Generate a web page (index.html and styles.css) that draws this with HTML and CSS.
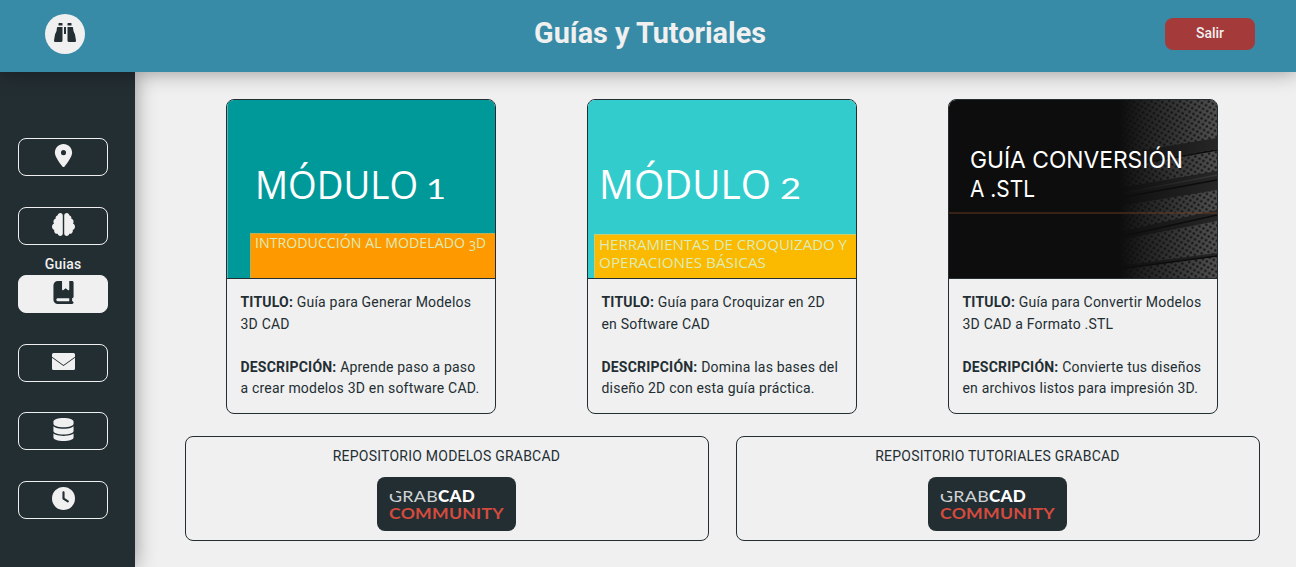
FILE: index.html
```html
<!DOCTYPE html>
<html lang="es">
<head>
<meta charset="utf-8">
<title>Guías y Tutoriales</title>
<link rel="stylesheet" href="styles.css">
</head>
<body>
<header class="header">
  <a class="brand"><svg width="22" height="20" viewBox="0 0 22 20"><path d="M5 0h3q.5 0 .5.5V2.500h-4V.5Q4.500 0 5 0zm9 0h3q.5 0 .5.5v2h-4V.5q0-.5.5-.5zM3.500 4h5v13.500q0 1.500-1.500 1.500H1q-1 0-1-1.500l1-6q2-3 2-7zm10 0h5l.5.5q0 4 2 7l1 6q0 1.500-1 1.500h-6q-1.500 0-1.500-1.500zM10 4h2v7h-2z"/></svg></a>
  <h1 class="title">Guías y Tutoriales</h1>
  <button class="logout">Salir</button>
</header>
<div class="body">
  <nav class="sidebar">
    <a class="nav"><svg class="icon" viewBox="0 0 512 512"><path transform="translate(64)" d="M215.7 499.2C267 435 384 279.4 384 192C384 86 298 0 192 0S0 86 0 192c0 87.400 117 243 168.300 307.200c12.300 15.300 35.100 15.300 47.400 0zM192 136a56 56 0 1 1 0 112 56 56 0 1 1 0-112z"/></svg></a>
    <a class="nav"><svg class="icon" viewBox="0 0 512 512"><path d="M184 0c30.900 0 56 25.100 56 56V456c0 30.900-25.100 56-56 56c-28.900 0-52.700-21.900-55.700-50.100c-5.200 1.400-10.700 2.100-16.300 2.100c-35.300 0-64-28.700-64-64c0-7.400 1.300-14.600 3.600-21.200C21.400 367.400 0 338.200 0 304c0-31.900 18.700-59.500 45.800-72.300C37.100 220.800 32 207 32 192c0-30.700 21.600-56.300 50.400-62.600C80.800 123.900 80 118 80 112c0-29.900 20.600-55.100 48.300-62.100C131.300 21.900 155.100 0 184 0zM328 0c28.900 0 52.600 21.900 55.700 49.900c27.800 7 48.300 32.100 48.300 62.100c0 6-.8 11.900-2.400 17.400c28.800 6.200 50.400 31.900 50.400 62.600c0 15-5.100 28.800-13.800 39.700C493.300 244.500 512 272.100 512 304c0 34.200-21.400 63.400-51.600 74.800c2.300 6.600 3.600 13.800 3.600 21.200c0 35.300-28.700 64-64 64c-5.600 0-11.100-.7-16.300-2.100c-3 28.200-26.800 50.100-55.700 50.100c-30.900 0-56-25.100-56-56V56c0-30.900 25.100-56 56-56z"/></svg></a>
    <div class="current">
      <span class="caption">Guias</span>
      <a class="nav active"><svg class="icon" viewBox="0 0 512 512"><path fill-rule="evenodd" transform="translate(32)" d="M0 96C0 43 43 0 96 0h96v190.700c0 13.400 15.500 20.900 26 12.500L272 160l54 43.200c10.500 8.400 26 .9 26-12.500V0h64c17.700 0 32 14.300 32 32v320c0 17.700-14.300 32-32 32v64c17.700 0 32 14.300 32 32s-14.300 32-32 32H96c-53 0-96-43-96-96zM64 416c0 17.700 14.300 32 32 32h256v-64H96c-17.700 0-32 14.300-32 32z"/></svg></a>
    </div>
    <a class="nav"><svg class="icon" viewBox="0 0 23 23"><path d="M1.500 3h20q1.500 0 1.500 1.500v2.200L11.500 15 0 6.700v-2.200Q0 3 1.500 3zM0 7.800l11.500 8.300L23 7.800v10.700q0 1.500-1.500 1.500h-20Q0 20 0 18.500z"/></svg></a>
    <a class="nav"><svg class="icon" viewBox="0 0 512 512"><path transform="translate(32)" d="M448 80v48c0 44.200-100.300 80-224 80S0 172.200 0 128V80C0 35.800 100.300 0 224 0S448 35.800 448 80zM393.200 214.700c20.800-7.400 39.900-16.900 54.800-28.600V288c0 44.200-100.300 80-224 80S0 332.200 0 288V186.100c14.900 11.800 34 21.200 54.800 28.600C99.700 230.700 159.500 240 224 240s124.300-9.300 169.200-25.300zM0 346.100c14.900 11.800 34 21.200 54.800 28.600C99.700 390.700 159.500 400 224 400s124.300-9.300 169.200-25.300c20.800-7.400 39.900-16.900 54.800-28.600V432c0 44.200-100.300 80-224 80S0 476.200 0 432V346.100z"/></svg></a>
    <a class="nav"><svg class="icon" viewBox="0 0 512 512"><path d="M256 0a256 256 0 1 1 0 512A256 256 0 1 1 256 0zM232 120V256c0 8 4 15.500 10.700 20l96 64c11 7.400 25.900 4.400 33.300-6.700s4.400-25.900-6.700-33.300L280 243.200V120c0-13.300-10.700-24-24-24s-24 10.700-24 24z"/></svg></a>
  </nav>
  <main class="content">
    <section class="cards">
      <article class="card">
        <svg class="cover" viewBox="0 0 268 178">
          <rect width="268" height="178" fill="#009999"/>
          <rect width="1" height="178" fill="#55b8b4"/>
          <rect x="23.500" y="133.500" width="247" height="46" fill="#ff9900" stroke="#b5b25a"/>
          <g class="slide"><text x="28" y="99" font-size="38" textLength="163" lengthAdjust="spacingAndGlyphs">MÓDULO</text><text class="digit" x="199" y="99" font-size="27" textLength="20" lengthAdjust="spacingAndGlyphs">1</text></g>
          <g class="slide pale" font-size="14"><text x="28" y="148" textLength="210" lengthAdjust="spacingAndGlyphs">INTRODUCCIÓN AL MODELADO</text><text x="242" y="151" textLength="7" lengthAdjust="spacingAndGlyphs">3</text><text x="249" y="148" textLength="10" lengthAdjust="spacingAndGlyphs">D</text></g>
        </svg>
        <div class="info"><p><b>TITULO:</b> Guía para Generar Modelos<br>3D CAD</p><p><b>DESCRIPCIÓN:</b> Aprende paso a paso<br>a crear modelos 3D en software CAD.</p></div>
      </article>
      <article class="card">
        <svg class="cover" viewBox="0 0 268 178">
          <rect width="268" height="178" fill="#33cccc"/>
          <rect x="6.500" y="134.500" width="263" height="46" fill="#fbb900" stroke="#c5cf78"/>
          <g class="slide"><text x="11" y="99" font-size="39.500" textLength="172" lengthAdjust="spacingAndGlyphs">MÓDULO</text><text class="digit" x="192" y="99" font-size="28" textLength="21" lengthAdjust="spacingAndGlyphs">2</text></g>
          <g class="slide pale" font-size="14.500"><text x="11" y="150" textLength="248" lengthAdjust="spacingAndGlyphs">HERRAMIENTAS DE CROQUIZADO Y</text><text x="11" y="168" textLength="167" lengthAdjust="spacingAndGlyphs">OPERACIONES BÁSICAS</text></g>
        </svg>
        <div class="info"><p><b>TITULO:</b> Guía para Croquizar en 2D<br>en Software CAD</p><p><b>DESCRIPCIÓN:</b> Domina las bases del<br>diseño 2D con esta guía práctica.</p></div>
      </article>
      <article class="card">
        <svg class="cover" viewBox="0 0 268 178">
          <defs>
            <pattern id="mesh" width="7" height="6" patternUnits="userSpaceOnUse" patternTransform="rotate(-12)"><rect width="7" height="6" fill="#505050"/><circle cx="1.750" cy="1.500" r="1.350" fill="#181818"/><circle cx="5.250" cy="4.500" r="1.350" fill="#181818"/></pattern>
            <linearGradient id="fade"><stop offset="0" stop-color="#0d0d0d"/><stop offset=".25" stop-color="#0d0d0d" stop-opacity=".7"/><stop offset="1" stop-color="#0d0d0d" stop-opacity="0"/></linearGradient>
          </defs>
          <rect width="268" height="178" fill="#0d0d0d"/>
          <rect x="170" width="98" height="178" fill="url(#mesh)"/>
          <path d="M170 54L268 38V49L170 66zM170 88L268 71V90L170 106zM170 132L268 110V121L170 140zM170 166L268 153V156L170 169z" fill="#262626"/>
          <path d="M170 67L268 50M170 98L268 80M170 137L268 115M170 169L268 156" stroke="#0c0c0c" stroke-width="1.500"/>
          <path d="M170 94L268 75" stroke="#393939" stroke-width="1.500"/>
          <rect x="170" width="98" height="178" fill="url(#fade)"/>
          <rect y="112" width="268" height="2" fill="#7a4023" opacity=".4"/>
          <g class="slide-inter"><text x="21" y="68" textLength="213" lengthAdjust="spacingAndGlyphs">GUÍA CONVERSIÓN</text><text x="21" y="96.500" textLength="65" lengthAdjust="spacingAndGlyphs">A .STL</text></g>
        </svg>
        <div class="info"><p><b>TITULO:</b> Guía para Convertir Modelos<br>3D CAD a Formato .STL</p><p><b>DESCRIPCIÓN:</b> Convierte tus diseños<br>en archivos listos para impresión 3D.</p></div>
      </article>
    </section>
    <section class="repos">
      <article class="repo"><span>REPOSITORIO MODELOS GRABCAD</span>
        <a class="logo"><svg width="139" height="54"><g font-size="16"><text x="12" y="24.500" textLength="49" lengthAdjust="spacingAndGlyphs" class="thin">GRAB</text><text x="61" y="24.500" textLength="37" lengthAdjust="spacingAndGlyphs" class="heavy">CAD</text><text x="12" y="42" textLength="115" lengthAdjust="spacingAndGlyphs" class="red">COMMUNITY</text></g><path d="M11 12h8v5h-8z" fill="#232e33"/></svg></a></article>
      <article class="repo"><span>REPOSITORIO TUTORIALES GRABCAD</span>
        <a class="logo"><svg width="139" height="54"><g font-size="16"><text x="12" y="24.500" textLength="49" lengthAdjust="spacingAndGlyphs" class="thin">GRAB</text><text x="61" y="24.500" textLength="37" lengthAdjust="spacingAndGlyphs" class="heavy">CAD</text><text x="12" y="42" textLength="115" lengthAdjust="spacingAndGlyphs" class="red">COMMUNITY</text></g><path d="M11 12h8v5h-8z" fill="#232e33"/></svg></a></article>
    </section>
  </main>
</div>
</body>
</html>
```
FILE: styles.css
```css
* { box-sizing: border-box; }
body { margin: 0; height: 567px; overflow: hidden; display: flex; flex-direction: column; background: #f0f0f0; color: #232e33; font-family: Roboto, sans-serif; }
.header { position: relative; z-index: 2; height: 72px; flex: none; display: grid; grid-template-columns: 135px 1fr 135px; align-items: start; background: #388ba6; box-shadow: 0 0 20px rgba(0,0,0,.4); }
.brand { width: 40px; height: 40px; margin: 14px 0 0 45px; padding-bottom: 2px; border-radius: 50%; background: #f0f0f0; display: flex; align-items: center; justify-content: center; fill: #232e33; }
.title { margin: 16px 0 0; text-align: center; font-size: 28.800px; line-height: 34px; color: #f0f0f0; font-weight: 700; padding-left: 4px; }
.logout { margin: 18px 0 0 4px; width: 90px; height: 32px; border: 0; border-radius: 8px; background: #a43a3a; color: #f0f0f0; font: 500 14px Roboto, sans-serif; padding: 0 0 2px; }
.body { flex: 1; display: flex; min-height: 0; }
.sidebar { width: 135px; flex: none; background: #232e33; box-shadow: 0 0 20px rgba(0,0,0,.4); padding: 66px 27px 0 18px; display: flex; flex-direction: column; z-index: 1; gap: 30.600px; }
.nav { flex: none; width: 90px; height: 38px; border: 1px solid #f0f0f0; border-radius: 8px; display: flex; align-items: center; justify-content: center; fill: #f0f0f0; padding-bottom: 3px; }
.icon { width: 23px; height: 23px; }
.current { margin-top: -19px; display: flex; flex-direction: column; align-items: center; gap: 2px; }
.caption { font-size: 14px; font-weight: 500; line-height: 17px; color: #f0f0f0; letter-spacing: .2px; }
.active { background: #f0f0f0; fill: #232e33; }
.content { flex: 1; padding: 27px 36px 0 50px; }
.cards { display: flex; justify-content: space-between; padding: 0 42px 0 41px; }
.card { width: 270px; height: 315px; border: 1px solid #232e33; border-radius: 8px; overflow: hidden; }
.cover { display: block; width: 268px; height: 178px; }
.info { border-top: 1px solid #232e33; padding: 13px 0 0 13.500px; font-size: 14px; line-height: 21.600px; letter-spacing: .2px; white-space: nowrap; }
.info p { margin: 0 0 21.600px; }
.repos { display: flex; gap: 27px; margin-top: 22px; }
.repo { flex: 1; height: 105px; border: 1px solid #232e33; border-radius: 8px; display: flex; flex-direction: column; align-items: center; padding: 11px 1px 0 0; gap: 12px; font-size: 14px; line-height: 17px; letter-spacing: .23px; }
.logo { width: 139px; height: 54px; border-radius: 8px; background: #232e33; }
.slide { font-family: "Open Sans", sans-serif; fill: #fff; }
.digit { font-family: Lato, sans-serif; }
.pale { fill: #dcecb8; }
.slide-inter { font-family: Inter, sans-serif; font-size: 23.500px; fill: #fff; }
.thin { font-family: Lato, sans-serif; font-weight: 400; fill: #d0d3d4; }
.heavy { font-family: Lato, sans-serif; font-weight: 900; fill: #fff; }
.red { font-family: Lato, sans-serif; font-weight: 700; fill: #d44b3e; }
```
